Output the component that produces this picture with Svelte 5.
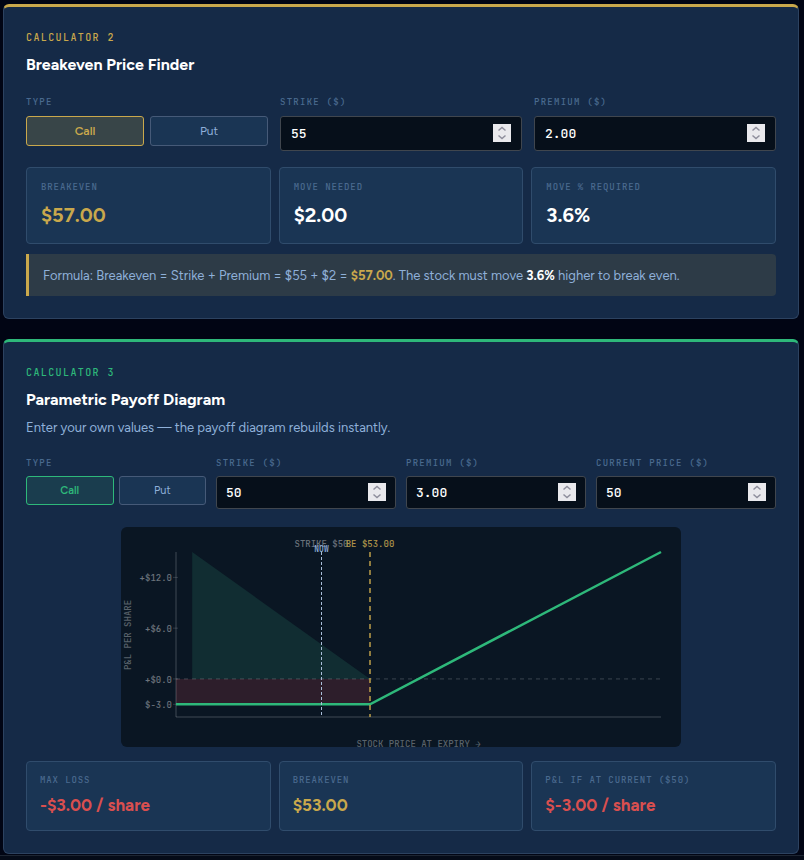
<script lang="ts">
  type OptionType = 'call' | 'put';

  let beType: OptionType = $state('call');
  let beStrike: string | number = $state('55');
  let bePremium: string | number = $state('2.00');

  let pdType: OptionType = $state('call');
  let pdStrike: string | number = $state('50');
  let pdPremium: string | number = $state('3.00');
  let pdCurrent: string | number = $state('50');

  function breakevenOf(type: OptionType, strike: number, premium: number) {
    return type === 'call' ? strike + premium : strike - premium;
  }

  let breakeven = $derived(breakevenOf(beType, Number(beStrike), Number(bePremium)));
  let movePct = $derived(((Number(bePremium) / Number(beStrike)) * 100).toFixed(1));

  let premium = $derived(Number(pdPremium));
  let strike = $derived(Number(pdStrike));
  let current = $derived(Number(pdCurrent));
  let payoffBe = $derived(breakevenOf(pdType, strike, premium));
  let intrinsic = $derived(
    pdType === 'call' ? Math.max(0, current - strike) : Math.max(0, strike - current)
  );
  let pnl = $derived(intrinsic - premium);

  // plot area inside the 560x220 viewBox
  const L = 55;
  const R = 540;
  const T = 25;
  const B = 190;

  let minPrice = $derived(payoffBe - premium * 4);
  let maxPrice = $derived(payoffBe + premium * 6);
  let maxPnl = $derived(premium * 5);
  let minPnl = $derived(premium * -1.5);

  function sx(p: number) {
    return L + ((p - minPrice) / (maxPrice - minPrice)) * (R - L);
  }
  function sy(v: number) {
    return T + ((maxPnl - v) / (maxPnl - minPnl)) * (B - T);
  }

  let ticks = $derived([premium * 4, premium * 2, 0, -premium]);
  let line = $derived(
    pdType === 'call'
      ? `${L},${sy(-premium)} ${sx(payoffBe)},${sy(-premium)} ${R},${T}`
      : `${L},${T} ${sx(payoffBe)},${sy(-premium)} ${R},${sy(-premium)}`
  );

  function step(value: string | number, by: number, digits: number) {
    return Math.max(0, Number(value) + by).toFixed(digits);
  }
</script>

{#snippet spinner(label: string, change: (dir: number) => void)}
  <span class="spinner">
    <button type="button" aria-label="Increase {label}" onclick={() => change(1)}>
      <svg viewBox="0 0 18 9" aria-hidden="true"><path d="M5.5 6.5 9 3.5 12.5 6.5" /></svg>
    </button>
    <button type="button" aria-label="Decrease {label}" onclick={() => change(-1)}>
      <svg viewBox="0 0 18 9" aria-hidden="true"><path d="M5.5 2.5 9 5.5 12.5 2.5" /></svg>
    </button>
  </span>
{/snippet}

<main>
  <section class="card gold">
    <div class="eyebrow">Calculator 2</div>
    <h2>Breakeven Price Finder</h2>

    <div class="fields">
      <div class="field" role="group" aria-labelledby="be-type">
        <span class="label" id="be-type">Type</span>
        <div class="toggle">
          <button class:active={beType === 'call'} onclick={() => (beType = 'call')}>Call</button>
          <button class:active={beType === 'put'} onclick={() => (beType = 'put')}>Put</button>
        </div>
      </div>
      <div class="field">
        <label class="label" for="be-strike">Strike ($)</label>
        <div class="number">
          <input id="be-strike" type="number" bind:value={beStrike} />
          {@render spinner('strike', (d) => (beStrike = step(beStrike, d, 0)))}
        </div>
      </div>
      <div class="field">
        <label class="label" for="be-premium">Premium ($)</label>
        <div class="number">
          <input id="be-premium" type="number" step="0.01" bind:value={bePremium} />
          {@render spinner('premium', (d) => (bePremium = step(bePremium, d * 0.25, 2)))}
        </div>
      </div>
    </div>

    <div class="stats">
      <div class="stat">
        <div class="stat-label">Breakeven</div>
        <div class="stat-value accent">${breakeven.toFixed(2)}</div>
      </div>
      <div class="stat">
        <div class="stat-label">Move Needed</div>
        <div class="stat-value">${Number(bePremium).toFixed(2)}</div>
      </div>
      <div class="stat">
        <div class="stat-label">Move % Required</div>
        <div class="stat-value">{movePct}%</div>
      </div>
    </div>

    <div class="formula">
      Formula: Breakeven = Strike {beType === 'call' ? '+' : '−'} Premium = ${Number(beStrike)}
      {beType === 'call' ? '+' : '−'} ${Number(bePremium)} =
      <strong class="accent">${breakeven.toFixed(2)}</strong>. The stock must move
      <strong>{movePct}%</strong>
      {beType === 'call' ? 'higher' : 'lower'} to break even.
    </div>
  </section>

  <section class="card green">
    <div class="eyebrow">Calculator 3</div>
    <h2>Parametric Payoff Diagram</h2>
    <p>Enter your own values — the payoff diagram rebuilds instantly.</p>

    <div class="fields compact">
      <div class="field" role="group" aria-labelledby="pd-type">
        <span class="label" id="pd-type">Type</span>
        <div class="toggle">
          <button class:active={pdType === 'call'} onclick={() => (pdType = 'call')}>Call</button>
          <button class:active={pdType === 'put'} onclick={() => (pdType = 'put')}>Put</button>
        </div>
      </div>
      <div class="field">
        <label class="label" for="pd-strike">Strike ($)</label>
        <div class="number">
          <input id="pd-strike" type="number" bind:value={pdStrike} />
          {@render spinner('strike', (d) => (pdStrike = step(pdStrike, d, 0)))}
        </div>
      </div>
      <div class="field">
        <label class="label" for="pd-premium">Premium ($)</label>
        <div class="number">
          <input id="pd-premium" type="number" step="0.01" bind:value={pdPremium} />
          {@render spinner('premium', (d) => (pdPremium = step(pdPremium, d * 0.25, 2)))}
        </div>
      </div>
      <div class="field">
        <label class="label" for="pd-current">Current Price ($)</label>
        <div class="number">
          <input id="pd-current" type="number" bind:value={pdCurrent} />
          {@render spinner('current price', (d) => (pdCurrent = step(pdCurrent, d, 0)))}
        </div>
      </div>
    </div>

    <svg class="chart" viewBox="0 0 560 220" role="img" aria-label="Payoff diagram">
      <polygon
        class="profit"
        points="{sx(minPrice + 1)},{T} {sx(payoffBe)},{sy(0)} {sx(minPrice + 1)},{sy(0)}"
      />
      <rect class="loss" x={L} y={sy(0)} width={sx(payoffBe) - L} height={sy(-premium) - sy(0)} />

      <line class="axis" x1={L} y1={T} x2={L} y2={B} />
      <line class="axis" x1={L} y1={B} x2={R} y2={B} />
      <line class="zero" x1={L} y1={sy(0)} x2={R} y2={sy(0)} />

      {#each ticks as t}
        <line class="tick" x1={L - 3} y1={sy(t)} x2={L + 2} y2={sy(t)} />
        <text class="muted" x={L - 4} y={sy(t) + 4} text-anchor="end">
          {t >= 0 ? '+' : ''}${t.toFixed(1)}
        </text>
      {/each}

      <polyline class="payoff" points={line} />
      <line class="be" x1={sx(payoffBe)} y1={T} x2={sx(payoffBe)} y2={B} />
      <line class="now" x1={sx(current)} y1={T} x2={sx(current)} y2={B} />

      <text class="muted" x={sx(strike)} y="20" text-anchor="middle">STRIKE ${strike}</text>
      <text class="be-label" x={sx(payoffBe)} y="20" text-anchor="middle">
        BE ${payoffBe.toFixed(2)}
      </text>
      <text class="now-label" x={sx(current)} y="25" text-anchor="middle">NOW</text>

      <text class="dim" x={(L + R) / 2} y="220" text-anchor="middle">STOCK PRICE AT EXPIRY →</text>
      <text class="dim" transform="translate(10 108) rotate(-90)" text-anchor="middle">
        P&amp;L PER SHARE
      </text>
    </svg>

    <div class="stats compact">
      <div class="stat">
        <div class="stat-label">Max Loss</div>
        <div class="stat-value red">-${premium.toFixed(2)} / share</div>
      </div>
      <div class="stat">
        <div class="stat-label">Breakeven</div>
        <div class="stat-value accent">${payoffBe.toFixed(2)}</div>
      </div>
      <div class="stat">
        <div class="stat-label">P&amp;L if at current (${current})</div>
        <div class="stat-value" class:red={pnl < 0}>${pnl.toFixed(2)} / share</div>
      </div>
    </div>
  </section>
</main>

<footer></footer>

<style>
  :global(body) {
    margin: 0;
    background: #010514;
    overflow: hidden;
  }

  main {
    --gold: #c9a84c;
    --green: #2eb87a;
    --mono: 'JetBrains Mono', 'DejaVu Sans Mono', monospace;
    --sans: Figtree, Lato, sans-serif;
    display: flex;
    flex-direction: column;
    gap: 20px;
    padding: 4px 5px 1px 3px;
    font-family: var(--sans);
    color: #8fb0d9;
  }

  footer {
    height: 16px;
    border-top: 1px solid #1d2532;
    background: #050b18;
  }

  .card {
    padding: 22px;
    background: #152a47;
    border: 1px solid #2c4260;
    border-top: 3px solid var(--hue);
    border-radius: 6px;
  }

  .gold {
    --hue: var(--gold);
    --tint: #384548;
  }

  .green {
    --hue: var(--green);
    --tint: #1a3d4e;
  }

  .eyebrow {
    font: 500 10px/18px var(--mono);
    letter-spacing: 0.14em;
    text-transform: uppercase;
    color: var(--hue);
  }

  h2 {
    margin: 5px 0 0;
    font-size: 16px;
    font-weight: 700;
    line-height: 26px;
    color: #fff;
  }

  p {
    margin: 4px 0 0;
    font-size: 13px;
    line-height: 21px;
  }

  .fields {
    display: grid;
    grid-template-columns: repeat(3, 1fr);
    gap: 12px;
    margin-top: 16px;
  }

  .fields.compact {
    grid-template-columns: repeat(4, 1fr);
    gap: 10px;
    margin-top: 17px;
  }

  .label {
    display: block;
    margin-bottom: 5px;
    font: 500 9px/17px var(--mono);
    letter-spacing: 0.14em;
    text-transform: uppercase;
    color: #4a6a8f;
  }

  .compact .label {
    margin-bottom: 4px;
  }

  .toggle {
    display: grid;
    grid-template-columns: 1fr 1fr;
    gap: 6px;
  }

  .compact .toggle {
    gap: 5px;
  }

  .toggle button {
    height: 30px;
    padding: 0;
    font: 12px var(--sans);
    color: #8fb0d9;
    background: #1a3554;
    border: 1px solid #465a78;
    border-radius: 3px;
    cursor: pointer;
  }

  .compact .toggle button {
    height: 29px;
    font-size: 11px;
  }

  .toggle .active {
    font-weight: 600;
    color: var(--hue);
    background: var(--tint);
    border-color: var(--hue);
  }

  .number {
    position: relative;
  }

  input {
    display: block;
    box-sizing: border-box;
    width: 100%;
    height: 35px;
    padding: 0 10px;
    font: 500 13px var(--mono);
    color: #fff;
    background: #060f1a;
    border: 1px solid #40464e;
    border-radius: 3px;
    appearance: textfield;
  }

  .compact input {
    height: 33px;
    padding: 0 9px;
  }

  input::-webkit-inner-spin-button {
    appearance: none;
  }

  .spinner {
    position: absolute;
    top: 8px;
    right: 11px;
    display: grid;
    width: 18px;
    height: 18px;
    background: #e9e9ed;
  }

  .compact .spinner {
    top: 7px;
    right: 10px;
  }

  .spinner button {
    height: 9px;
    padding: 0;
    background: none;
    border: 0;
  }

  .spinner svg {
    display: block;
    width: 18px;
    height: 9px;
    fill: none;
    stroke: #8f8f9d;
    stroke-width: 1.5;
  }

  .stats {
    display: grid;
    grid-template-columns: repeat(3, 1fr);
    gap: 8px;
    margin-top: 16px;
  }

  .stat {
    padding: 12px 14px;
    background: #1a3554;
    border: 1px solid #304c6c;
    border-radius: 4px;
  }

  .stat-label {
    margin-bottom: 5px;
    font: 500 9px/14px var(--mono);
    letter-spacing: 0.1em;
    text-transform: uppercase;
    color: #4a6a8f;
  }

  .stat-value {
    font-size: 20px;
    font-weight: 700;
    line-height: 32px;
    color: #fff;
  }

  .stats.compact {
    margin-top: 14px;
  }

  .compact .stat {
    padding: 11px 13px;
  }

  .compact .stat-label {
    margin-bottom: 4px;
  }

  .compact .stat-value {
    font-size: 17px;
    line-height: 28px;
  }

  .accent,
  .stat-value.accent {
    color: var(--gold);
  }

  .stat-value.red {
    color: #d94f4f;
  }

  .formula {
    margin-top: 10px;
    padding: 11px 14px 9px;
    font-size: 13px;
    line-height: 22px;
    background: #2d3b47;
    border-left: 3px solid var(--gold);
    border-radius: 0 4px 4px 0;
  }

  .formula strong {
    color: #fff;
  }

  .formula strong.accent {
    color: var(--gold);
  }

  .chart {
    display: block;
    width: 100%;
    max-width: 560px;
    margin: 18px auto 0;
    background: #0a1623;
    border-radius: 6px;
    font: 500 9px var(--mono);
  }

  .profit {
    fill: #112d32;
  }

  .loss {
    fill: #2d1e2b;
  }

  .axis {
    stroke: #fff;
    stroke-opacity: 0.15;
    stroke-width: 1.5;
  }

  .tick {
    stroke: #fff;
    stroke-opacity: 0.15;
  }

  .zero {
    stroke: #fff;
    stroke-opacity: 0.2;
    stroke-dasharray: 4 4;
  }

  .payoff {
    fill: none;
    stroke: var(--green);
    stroke-width: 2.5;
  }

  .be {
    stroke: var(--gold);
    stroke-opacity: 0.7;
    stroke-width: 2;
    stroke-dasharray: 5 4;
  }

  .now {
    stroke: #a9bdd8;
    stroke-dasharray: 3 2;
  }

  .muted {
    fill: #6a727b;
  }

  .be-label {
    fill: #b0954a;
  }

  .now-label {
    font-size: 8px;
    fill: #8fb0d9;
  }

  .dim {
    fill: #59626b;
  }
</style>
